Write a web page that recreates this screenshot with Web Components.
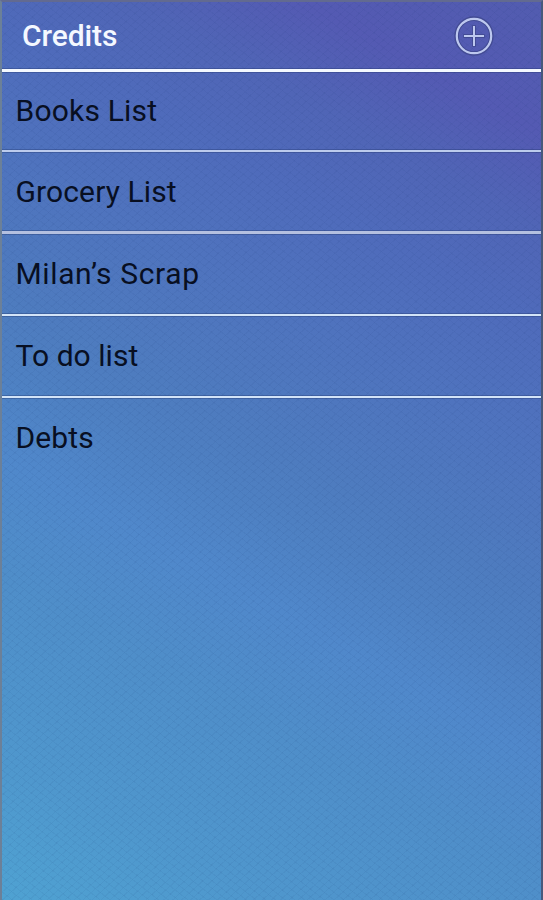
<!DOCTYPE html>
<html lang="en">
<head>
<meta charset="utf-8">
<title>Credits</title>
<style>
html,body{margin:0;height:100%;overflow:hidden}
body{font-family:Roboto,"Liberation Sans",sans-serif}
</style>
</head>
<body>
<list-screen>
  <screen-header>Credits<add-icon slot="action"></add-icon></screen-header>
  <list-row style="--h:81px;--w:3px;--ls:.2px">Books List</list-row>
  <list-row style="--line:#bccbed;--h:81px;--pb:0px;--ls:.12px">Grocery List</list-row>
  <list-row style="--line:#b4c0e0;--w:3px;--h:83px;--ls:.62px">Milan’s Scrap</list-row>
  <list-row style="--line:#d3e4f8;--ls:.05px">To do list</list-row>
  <list-row style="--line:#d3e4f8;--ls:.1px">Debts</list-row>
</list-screen>
<script>
const define = (name, html) => customElements.define(name, class extends HTMLElement {
  constructor() {
    super();
    this.attachShadow({ mode: 'open' }).innerHTML = html;
  }
});
define('list-screen', `<style>
:host{display:flex;flex-direction:column;box-sizing:border-box;width:100%;height:100vh;
border-top:2px solid #626a91;border-left:2px solid #6c8098;border-right:2px solid #46597c;
background:
repeating-linear-gradient(38deg,rgba(20,50,110,.055) 0 1px,transparent 1px 6px),
repeating-linear-gradient(-42deg,rgba(20,50,110,.055) 0 1px,transparent 1px 6px),
linear-gradient(209deg,#525cb0 0%,#545ab3 11%,#5065b6 19%,#4f6bbb 27%,#4f73be 37%,#4e7cbf 50%,#4e80c2 55%,#5088cb 63%,#4f8ec9 73%,#4f97cd 88%,#4fa2d2 100%)}
</style><slot></slot>`);
define('screen-header', `<style>
:host{display:flex;align-items:center;justify-content:space-between;box-sizing:border-box;
height:67px;padding:0 47px 0 20px;color:#f4f8ff;font-size:30px;font-weight:500;line-height:36px;letter-spacing:-.1px}
</style><span><slot></slot></span><slot name="action"></slot>`);
define('add-icon', `<style>:host{display:block;width:40px;height:40px}svg{display:block}</style>
<svg width="40" height="40" viewBox="0 0 40 40" fill="none">
<g stroke="#3a4384" stroke-opacity=".65"><circle cx="20" cy="20" r="17.4" stroke-width="4.6"/><path d="M20 9.3V30.7M9.3 20H30.7" stroke-width="4"/></g>
<g stroke="#bdc8ef"><circle cx="20" cy="20" r="17.2" stroke-width="2.2"/><path d="M20 10V30M10 20H30" stroke-width="2"/></g>
</svg>`);
define('list-row', `<style>
:host{display:flex;align-items:center;box-sizing:border-box;height:var(--h,82px);padding:0 13.5px var(--pb,1px);
border-top:var(--w,2px) solid var(--line,#f3f8ff);color:#080f22;font-size:30px;line-height:36px;letter-spacing:var(--ls,0);
box-shadow:0 -1px 0 rgba(35,55,110,.35),inset 0 1px 0 rgba(35,55,110,.35)}
</style><slot></slot>`);
</script>
</body>
</html>
